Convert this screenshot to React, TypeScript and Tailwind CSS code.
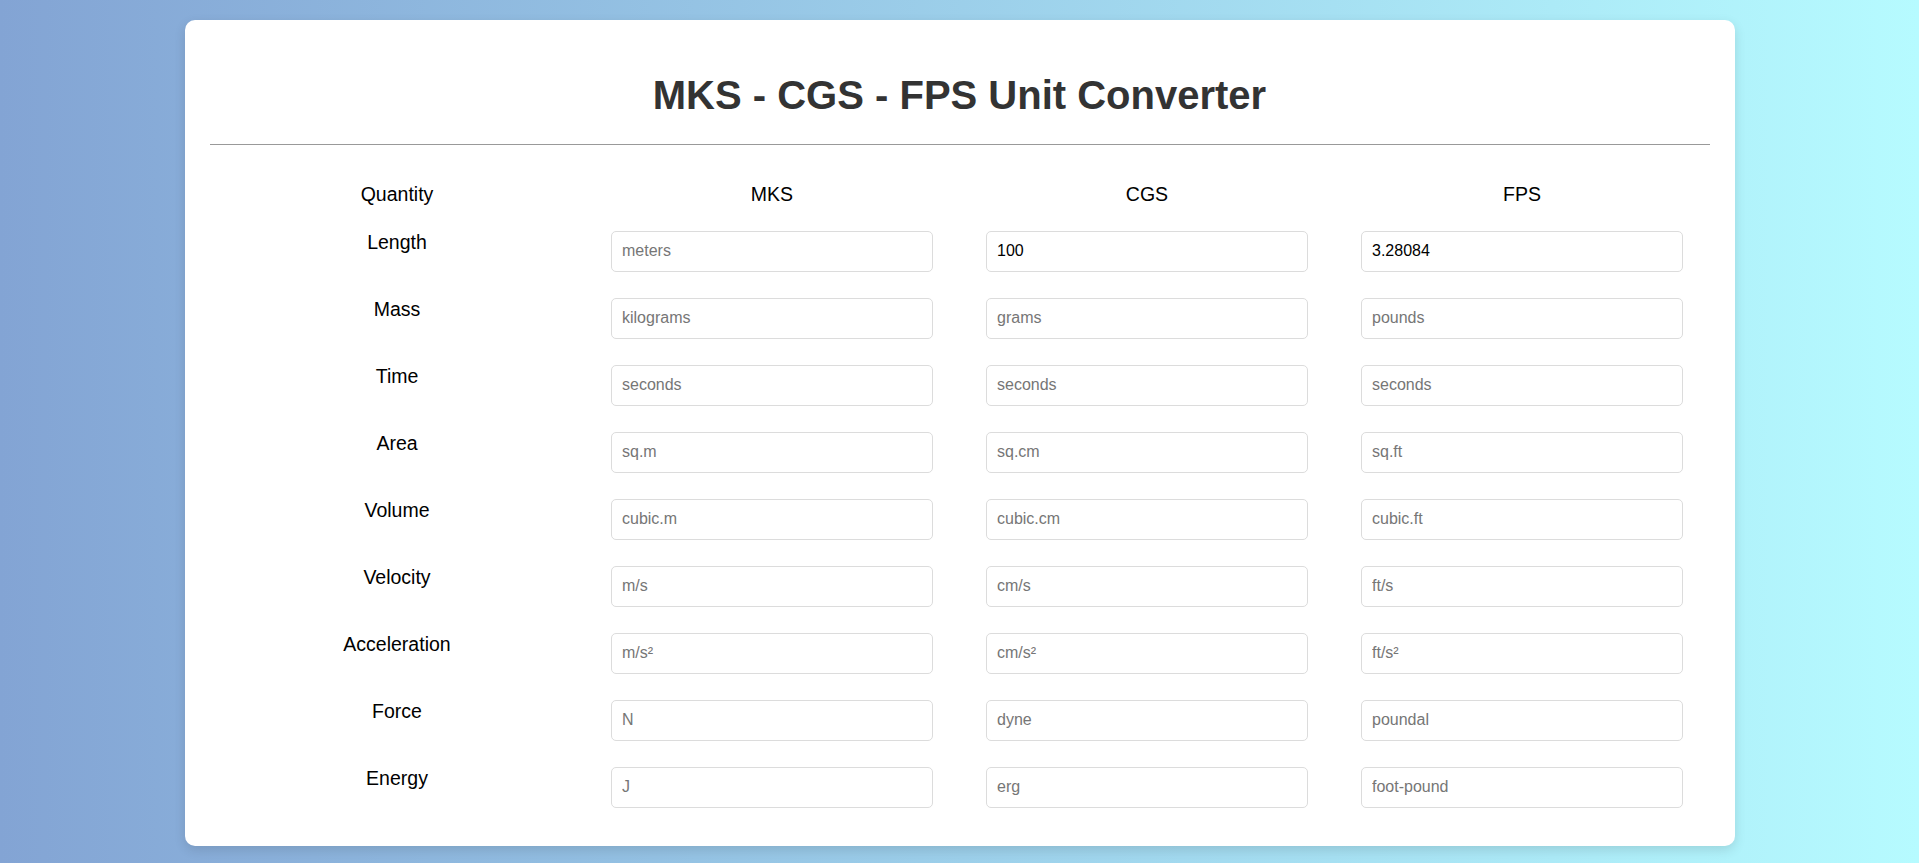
import React from "react";

type Row = { q: string; mks: string; cgs: string; fps: string; vals?: [string, string, string] };

const rows: Row[] = [
  { q: "Length", mks: "meters", cgs: "centimeters", fps: "feet", vals: ["", "100", "3.28084"] },
  { q: "Mass", mks: "kilograms", cgs: "grams", fps: "pounds" },
  { q: "Time", mks: "seconds", cgs: "seconds", fps: "seconds" },
  { q: "Area", mks: "sq.m", cgs: "sq.cm", fps: "sq.ft" },
  { q: "Volume", mks: "cubic.m", cgs: "cubic.cm", fps: "cubic.ft" },
  { q: "Velocity", mks: "m/s", cgs: "cm/s", fps: "ft/s" },
  { q: "Acceleration", mks: "m/s²", cgs: "cm/s²", fps: "ft/s²" },
  { q: "Force", mks: "N", cgs: "dyne", fps: "poundal" },
  { q: "Energy", mks: "J", cgs: "erg", fps: "foot-pound" },
];

function Field({ placeholder, value }: { placeholder: string; value?: string }) {
  return (
    <div className="flex justify-center">
      <input
        type="text"
        placeholder={placeholder}
        defaultValue={value ?? ""}
        className="w-[322px] h-[41px] px-[10px] pb-[2px] border border-[#dcdcdc] rounded-[5px] text-[16px] text-black placeholder:text-[#767676] bg-white outline-none"
        style={{ fontFamily: '"Liberation Sans", Arial, sans-serif' }}
      />
    </div>
  );
}

export default function App() {
  return (
    <div
      className="min-h-screen w-full bg-gradient-to-r from-[#83a4d4] to-[#b6fbff] pt-[20px]"
      style={{ fontFamily: '"Liberation Sans", Arial, sans-serif' }}
    >
      <div className="mx-auto w-[1550px] bg-white rounded-[10px] shadow-[0_4px_12px_rgba(0,0,0,0.12)] px-[25px] pt-[52px] pb-[38px]">
        <h1 className="text-center text-[40px] leading-[46px] font-bold text-[#333]">
          MKS - CGS - FPS Unit Converter
        </h1>
        <div className="mt-[26px] h-px bg-[#999]" />
        <div className="grid grid-cols-4 mt-[38px] text-[19.5px] leading-[22px] text-black">
          <div className="text-center">Quantity</div>
          <div className="text-center">MKS</div>
          <div className="text-center">CGS</div>
          <div className="text-center">FPS</div>
        </div>
        <div className="mt-[26px] flex flex-col gap-[26px]">
          {rows.map((r) => (
            <div key={r.q} className="grid grid-cols-4 items-start">
              <div className="text-center text-[19.5px] leading-[22px] text-black">{r.q}</div>
              <Field placeholder={r.mks} value={r.vals?.[0]} />
              <Field placeholder={r.cgs} value={r.vals?.[1]} />
              <Field placeholder={r.fps} value={r.vals?.[2]} />
            </div>
          ))}
        </div>
      </div>
    </div>
  );
}
